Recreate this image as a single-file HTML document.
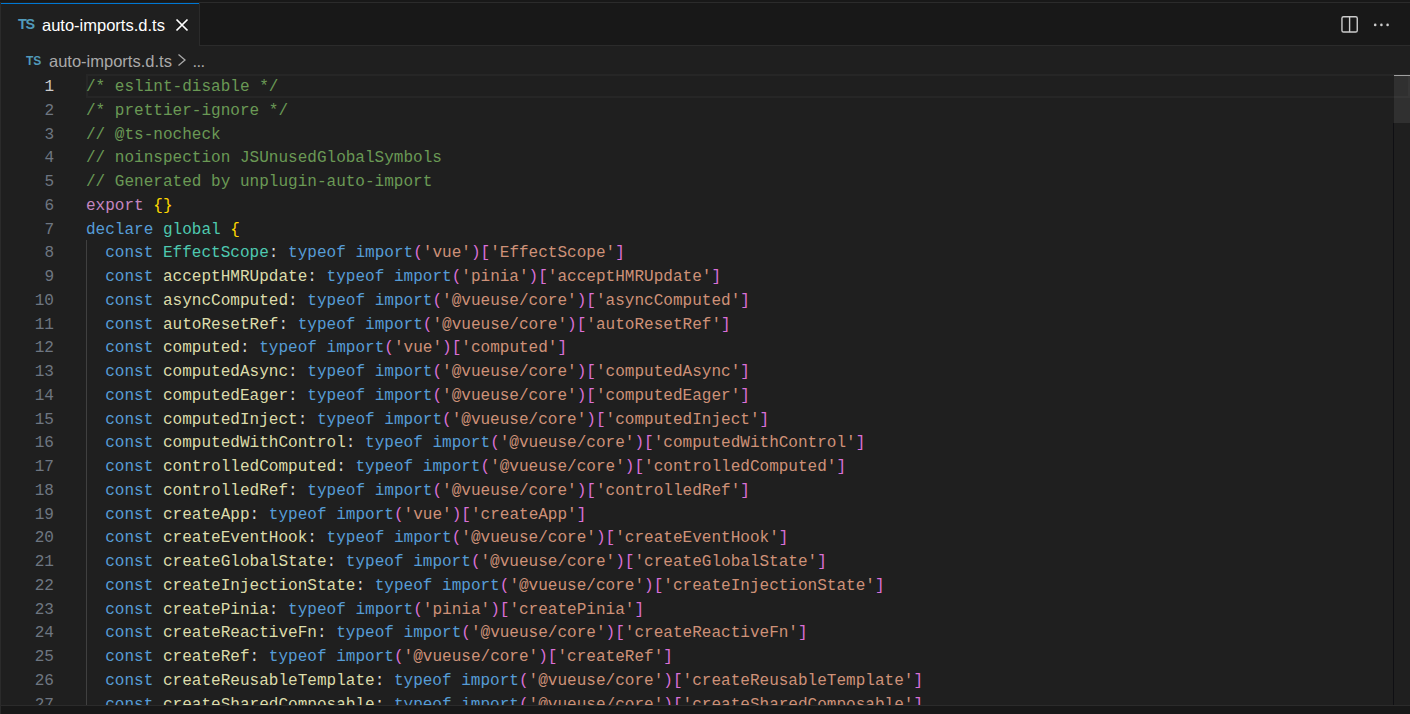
<!DOCTYPE html>
<html><head><meta charset="utf-8">
<style>
html,body{margin:0;padding:0;}
body{width:1410px;height:714px;overflow:hidden;background:#1f1f1f;position:relative;font-family:"Liberation Sans",sans-serif;}
.abs{position:absolute;}
#topstrip{left:0;top:0;width:1410px;height:2px;background:#181818;}
#leftcol{left:0;top:2px;width:1px;height:712px;background:#2b2b2b;}
#tabbar{left:200px;top:2px;width:1210px;height:44px;background:#181818;box-sizing:border-box;border-top:1px solid #2b2b2b;border-bottom:1px solid #2b2b2b;}
#tab{left:1px;top:2px;width:198px;height:44px;background:#1f1f1f;}
#tabtop{left:1px;top:3px;width:198px;height:1px;background:#0078d4;}
#tabtop0{left:1px;top:2px;width:198px;height:1px;background:#181818;}
#tabr{left:199px;top:2px;width:1px;height:44px;background:#2b2b2b;}
.sans{font-family:"Liberation Sans",sans-serif;white-space:pre;}
#tabtxt{left:42px;top:13px;font-size:16.5px;line-height:24px;color:#ffffff;}
#bctxt{left:49px;top:49px;font-size:16.5px;line-height:24px;color:#a9a9a9;}
.ts{font-family:"Liberation Sans",sans-serif;font-weight:bold;color:#519aba;white-space:pre;}
#bottom{left:1px;top:705px;width:1409px;height:9px;background:#181818;border-top:1px solid #2b2b2b;box-sizing:border-box;}
.ln{position:absolute;left:86px;height:23.75px;line-height:23.75px;font-family:"Liberation Mono",monospace;font-size:16.04px;white-space:pre;color:#d4d4d4;}
.nm{position:absolute;left:0;width:54px;text-align:right;height:23.75px;line-height:23.75px;font-family:"Liberation Mono",monospace;font-size:16.04px;color:#6e7681;}
.nm.act{color:#cccccc;}
.guide{position:absolute;left:86px;width:1px;background:#404040;}
#curline{left:86px;top:74px;width:1324px;height:24px;border:2px solid #262626;box-sizing:border-box;}
#scroll{left:1394px;top:46px;width:16px;height:659px;}
#slider{left:1394px;top:76px;width:16px;height:47px;background:rgba(121,121,121,0.2);}
#rulerb{left:1393px;top:123px;width:1px;height:582px;background:#0f0f13;}
#ovcur{left:1394px;top:75px;width:16px;height:1px;background:#a0a0a0;}
</style></head><body>
<div class="abs" id="topstrip"></div>
<div class="abs" id="tabbar"></div>
<div class="abs" id="tab"></div>
<div class="abs" id="tabtop"></div>
<div class="abs" id="tabr"></div>
<div class="abs" id="leftcol"></div>
<div class="abs ts" style="left:18px;top:16px;font-size:14.4px;letter-spacing:-1.2px;">TS</div>
<div class="abs sans" id="tabtxt">auto-imports.d.ts</div>
<svg class="abs" style="left:175px;top:18px" width="14" height="14" viewBox="0 0 14 14"><path d="M1.5 1.5 L12.5 12.5 M12.5 1.5 L1.5 12.5" stroke="#ffffff" stroke-width="1.7" fill="none"/></svg>
<svg class="abs" style="left:1340px;top:15px" width="20" height="20" viewBox="0 0 20 20"><rect x="1.95" y="1.75" width="15.3" height="15.3" rx="1.6" stroke="#cccccc" stroke-width="1.4" fill="none"/><path d="M9.6 1.75 V17.05" stroke="#cccccc" stroke-width="1.4"/></svg>
<svg class="abs" style="left:1370px;top:20px" width="24" height="10" viewBox="0 0 24 10"><circle cx="5.2" cy="4.9" r="1.3" fill="#cccccc"/><circle cx="11.4" cy="4.9" r="1.3" fill="#cccccc"/><circle cx="17.6" cy="4.9" r="1.3" fill="#cccccc"/></svg>
<div class="abs ts" style="left:26px;top:54px;font-size:12px;">TS</div>
<div class="abs sans" id="bctxt">auto-imports.d.ts</div>
<svg class="abs" style="left:176px;top:53px" width="12" height="14" viewBox="0 0 12 14"><path d="M2.5 1.5 L9 7 L2.5 12.5" stroke="#a9a9a9" stroke-width="1.3" fill="none"/></svg>
<div class="abs sans" style="left:192.5px;top:49px;font-size:16.5px;line-height:24px;color:#a9a9a9;letter-spacing:-0.6px;">...</div>
<div class="abs" id="curline"></div>
<div class="guide" style="top:240px;height:465px"></div>
<div class="nm act" style="top:76.00px">1</div>
<div class="nm" style="top:100.00px">2</div>
<div class="nm" style="top:124.00px">3</div>
<div class="nm" style="top:147.00px">4</div>
<div class="nm" style="top:171.00px">5</div>
<div class="nm" style="top:195.00px">6</div>
<div class="nm" style="top:219.00px">7</div>
<div class="nm" style="top:242.00px">8</div>
<div class="nm" style="top:266.00px">9</div>
<div class="nm" style="top:290.00px">10</div>
<div class="nm" style="top:314.00px">11</div>
<div class="nm" style="top:337.00px">12</div>
<div class="nm" style="top:361.00px">13</div>
<div class="nm" style="top:385.00px">14</div>
<div class="nm" style="top:409.00px">15</div>
<div class="nm" style="top:432.00px">16</div>
<div class="nm" style="top:456.00px">17</div>
<div class="nm" style="top:480.00px">18</div>
<div class="nm" style="top:504.00px">19</div>
<div class="nm" style="top:527.00px">20</div>
<div class="nm" style="top:551.00px">21</div>
<div class="nm" style="top:575.00px">22</div>
<div class="nm" style="top:599.00px">23</div>
<div class="nm" style="top:622.00px">24</div>
<div class="nm" style="top:646.00px">25</div>
<div class="nm" style="top:670.00px">26</div>
<div class="nm" style="top:694.00px">27</div>
<div class="ln" style="top:76.00px"><span style="color:#6a9955">/* eslint-disable */</span></div>
<div class="ln" style="top:100.00px"><span style="color:#6a9955">/* prettier-ignore */</span></div>
<div class="ln" style="top:124.00px"><span style="color:#6a9955">// @ts-nocheck</span></div>
<div class="ln" style="top:147.00px"><span style="color:#6a9955">// noinspection JSUnusedGlobalSymbols</span></div>
<div class="ln" style="top:171.00px"><span style="color:#6a9955">// Generated by unplugin-auto-import</span></div>
<div class="ln" style="top:195.00px"><span style="color:#c586c0">export</span> <span style="color:#ffd700">{}</span></div>
<div class="ln" style="top:219.00px"><span style="color:#569cd6">declare</span> <span style="color:#4ec9b0">global</span> <span style="color:#ffd700">{</span></div>
<div class="ln" style="top:242.00px">  <span style="color:#569cd6">const</span> <span style="color:#4ec9b0">EffectScope</span><span style="color:#d4d4d4">:</span> <span style="color:#569cd6">typeof</span> <span style="color:#569cd6">import</span><span style="color:#da70d6">(</span><span style="color:#ce9178">&#x27;vue&#x27;</span><span style="color:#da70d6">)</span><span style="color:#da70d6">[</span><span style="color:#ce9178">&#x27;EffectScope&#x27;</span><span style="color:#da70d6">]</span></div>
<div class="ln" style="top:266.00px">  <span style="color:#569cd6">const</span> <span style="color:#dcdcaa">acceptHMRUpdate</span><span style="color:#d4d4d4">:</span> <span style="color:#569cd6">typeof</span> <span style="color:#569cd6">import</span><span style="color:#da70d6">(</span><span style="color:#ce9178">&#x27;pinia&#x27;</span><span style="color:#da70d6">)</span><span style="color:#da70d6">[</span><span style="color:#ce9178">&#x27;acceptHMRUpdate&#x27;</span><span style="color:#da70d6">]</span></div>
<div class="ln" style="top:290.00px">  <span style="color:#569cd6">const</span> <span style="color:#dcdcaa">asyncComputed</span><span style="color:#d4d4d4">:</span> <span style="color:#569cd6">typeof</span> <span style="color:#569cd6">import</span><span style="color:#da70d6">(</span><span style="color:#ce9178">&#x27;@vueuse/core&#x27;</span><span style="color:#da70d6">)</span><span style="color:#da70d6">[</span><span style="color:#ce9178">&#x27;asyncComputed&#x27;</span><span style="color:#da70d6">]</span></div>
<div class="ln" style="top:314.00px">  <span style="color:#569cd6">const</span> <span style="color:#dcdcaa">autoResetRef</span><span style="color:#d4d4d4">:</span> <span style="color:#569cd6">typeof</span> <span style="color:#569cd6">import</span><span style="color:#da70d6">(</span><span style="color:#ce9178">&#x27;@vueuse/core&#x27;</span><span style="color:#da70d6">)</span><span style="color:#da70d6">[</span><span style="color:#ce9178">&#x27;autoResetRef&#x27;</span><span style="color:#da70d6">]</span></div>
<div class="ln" style="top:337.00px">  <span style="color:#569cd6">const</span> <span style="color:#dcdcaa">computed</span><span style="color:#d4d4d4">:</span> <span style="color:#569cd6">typeof</span> <span style="color:#569cd6">import</span><span style="color:#da70d6">(</span><span style="color:#ce9178">&#x27;vue&#x27;</span><span style="color:#da70d6">)</span><span style="color:#da70d6">[</span><span style="color:#ce9178">&#x27;computed&#x27;</span><span style="color:#da70d6">]</span></div>
<div class="ln" style="top:361.00px">  <span style="color:#569cd6">const</span> <span style="color:#dcdcaa">computedAsync</span><span style="color:#d4d4d4">:</span> <span style="color:#569cd6">typeof</span> <span style="color:#569cd6">import</span><span style="color:#da70d6">(</span><span style="color:#ce9178">&#x27;@vueuse/core&#x27;</span><span style="color:#da70d6">)</span><span style="color:#da70d6">[</span><span style="color:#ce9178">&#x27;computedAsync&#x27;</span><span style="color:#da70d6">]</span></div>
<div class="ln" style="top:385.00px">  <span style="color:#569cd6">const</span> <span style="color:#dcdcaa">computedEager</span><span style="color:#d4d4d4">:</span> <span style="color:#569cd6">typeof</span> <span style="color:#569cd6">import</span><span style="color:#da70d6">(</span><span style="color:#ce9178">&#x27;@vueuse/core&#x27;</span><span style="color:#da70d6">)</span><span style="color:#da70d6">[</span><span style="color:#ce9178">&#x27;computedEager&#x27;</span><span style="color:#da70d6">]</span></div>
<div class="ln" style="top:409.00px">  <span style="color:#569cd6">const</span> <span style="color:#dcdcaa">computedInject</span><span style="color:#d4d4d4">:</span> <span style="color:#569cd6">typeof</span> <span style="color:#569cd6">import</span><span style="color:#da70d6">(</span><span style="color:#ce9178">&#x27;@vueuse/core&#x27;</span><span style="color:#da70d6">)</span><span style="color:#da70d6">[</span><span style="color:#ce9178">&#x27;computedInject&#x27;</span><span style="color:#da70d6">]</span></div>
<div class="ln" style="top:432.00px">  <span style="color:#569cd6">const</span> <span style="color:#dcdcaa">computedWithControl</span><span style="color:#d4d4d4">:</span> <span style="color:#569cd6">typeof</span> <span style="color:#569cd6">import</span><span style="color:#da70d6">(</span><span style="color:#ce9178">&#x27;@vueuse/core&#x27;</span><span style="color:#da70d6">)</span><span style="color:#da70d6">[</span><span style="color:#ce9178">&#x27;computedWithControl&#x27;</span><span style="color:#da70d6">]</span></div>
<div class="ln" style="top:456.00px">  <span style="color:#569cd6">const</span> <span style="color:#dcdcaa">controlledComputed</span><span style="color:#d4d4d4">:</span> <span style="color:#569cd6">typeof</span> <span style="color:#569cd6">import</span><span style="color:#da70d6">(</span><span style="color:#ce9178">&#x27;@vueuse/core&#x27;</span><span style="color:#da70d6">)</span><span style="color:#da70d6">[</span><span style="color:#ce9178">&#x27;controlledComputed&#x27;</span><span style="color:#da70d6">]</span></div>
<div class="ln" style="top:480.00px">  <span style="color:#569cd6">const</span> <span style="color:#dcdcaa">controlledRef</span><span style="color:#d4d4d4">:</span> <span style="color:#569cd6">typeof</span> <span style="color:#569cd6">import</span><span style="color:#da70d6">(</span><span style="color:#ce9178">&#x27;@vueuse/core&#x27;</span><span style="color:#da70d6">)</span><span style="color:#da70d6">[</span><span style="color:#ce9178">&#x27;controlledRef&#x27;</span><span style="color:#da70d6">]</span></div>
<div class="ln" style="top:504.00px">  <span style="color:#569cd6">const</span> <span style="color:#dcdcaa">createApp</span><span style="color:#d4d4d4">:</span> <span style="color:#569cd6">typeof</span> <span style="color:#569cd6">import</span><span style="color:#da70d6">(</span><span style="color:#ce9178">&#x27;vue&#x27;</span><span style="color:#da70d6">)</span><span style="color:#da70d6">[</span><span style="color:#ce9178">&#x27;createApp&#x27;</span><span style="color:#da70d6">]</span></div>
<div class="ln" style="top:527.00px">  <span style="color:#569cd6">const</span> <span style="color:#dcdcaa">createEventHook</span><span style="color:#d4d4d4">:</span> <span style="color:#569cd6">typeof</span> <span style="color:#569cd6">import</span><span style="color:#da70d6">(</span><span style="color:#ce9178">&#x27;@vueuse/core&#x27;</span><span style="color:#da70d6">)</span><span style="color:#da70d6">[</span><span style="color:#ce9178">&#x27;createEventHook&#x27;</span><span style="color:#da70d6">]</span></div>
<div class="ln" style="top:551.00px">  <span style="color:#569cd6">const</span> <span style="color:#dcdcaa">createGlobalState</span><span style="color:#d4d4d4">:</span> <span style="color:#569cd6">typeof</span> <span style="color:#569cd6">import</span><span style="color:#da70d6">(</span><span style="color:#ce9178">&#x27;@vueuse/core&#x27;</span><span style="color:#da70d6">)</span><span style="color:#da70d6">[</span><span style="color:#ce9178">&#x27;createGlobalState&#x27;</span><span style="color:#da70d6">]</span></div>
<div class="ln" style="top:575.00px">  <span style="color:#569cd6">const</span> <span style="color:#dcdcaa">createInjectionState</span><span style="color:#d4d4d4">:</span> <span style="color:#569cd6">typeof</span> <span style="color:#569cd6">import</span><span style="color:#da70d6">(</span><span style="color:#ce9178">&#x27;@vueuse/core&#x27;</span><span style="color:#da70d6">)</span><span style="color:#da70d6">[</span><span style="color:#ce9178">&#x27;createInjectionState&#x27;</span><span style="color:#da70d6">]</span></div>
<div class="ln" style="top:599.00px">  <span style="color:#569cd6">const</span> <span style="color:#dcdcaa">createPinia</span><span style="color:#d4d4d4">:</span> <span style="color:#569cd6">typeof</span> <span style="color:#569cd6">import</span><span style="color:#da70d6">(</span><span style="color:#ce9178">&#x27;pinia&#x27;</span><span style="color:#da70d6">)</span><span style="color:#da70d6">[</span><span style="color:#ce9178">&#x27;createPinia&#x27;</span><span style="color:#da70d6">]</span></div>
<div class="ln" style="top:622.00px">  <span style="color:#569cd6">const</span> <span style="color:#dcdcaa">createReactiveFn</span><span style="color:#d4d4d4">:</span> <span style="color:#569cd6">typeof</span> <span style="color:#569cd6">import</span><span style="color:#da70d6">(</span><span style="color:#ce9178">&#x27;@vueuse/core&#x27;</span><span style="color:#da70d6">)</span><span style="color:#da70d6">[</span><span style="color:#ce9178">&#x27;createReactiveFn&#x27;</span><span style="color:#da70d6">]</span></div>
<div class="ln" style="top:646.00px">  <span style="color:#569cd6">const</span> <span style="color:#dcdcaa">createRef</span><span style="color:#d4d4d4">:</span> <span style="color:#569cd6">typeof</span> <span style="color:#569cd6">import</span><span style="color:#da70d6">(</span><span style="color:#ce9178">&#x27;@vueuse/core&#x27;</span><span style="color:#da70d6">)</span><span style="color:#da70d6">[</span><span style="color:#ce9178">&#x27;createRef&#x27;</span><span style="color:#da70d6">]</span></div>
<div class="ln" style="top:670.00px">  <span style="color:#569cd6">const</span> <span style="color:#dcdcaa">createReusableTemplate</span><span style="color:#d4d4d4">:</span> <span style="color:#569cd6">typeof</span> <span style="color:#569cd6">import</span><span style="color:#da70d6">(</span><span style="color:#ce9178">&#x27;@vueuse/core&#x27;</span><span style="color:#da70d6">)</span><span style="color:#da70d6">[</span><span style="color:#ce9178">&#x27;createReusableTemplate&#x27;</span><span style="color:#da70d6">]</span></div>
<div class="ln" style="top:694.00px">  <span style="color:#569cd6">const</span> <span style="color:#dcdcaa">createSharedComposable</span><span style="color:#d4d4d4">:</span> <span style="color:#569cd6">typeof</span> <span style="color:#569cd6">import</span><span style="color:#da70d6">(</span><span style="color:#ce9178">&#x27;@vueuse/core&#x27;</span><span style="color:#da70d6">)</span><span style="color:#da70d6">[</span><span style="color:#ce9178">&#x27;createSharedComposable&#x27;</span><span style="color:#da70d6">]</span></div>
<div class="abs" id="slider"></div>
<div class="abs" id="ovcur"></div>
<div class="abs" id="rulerb"></div>
<div class="abs" id="bottom"></div>
</body></html>
